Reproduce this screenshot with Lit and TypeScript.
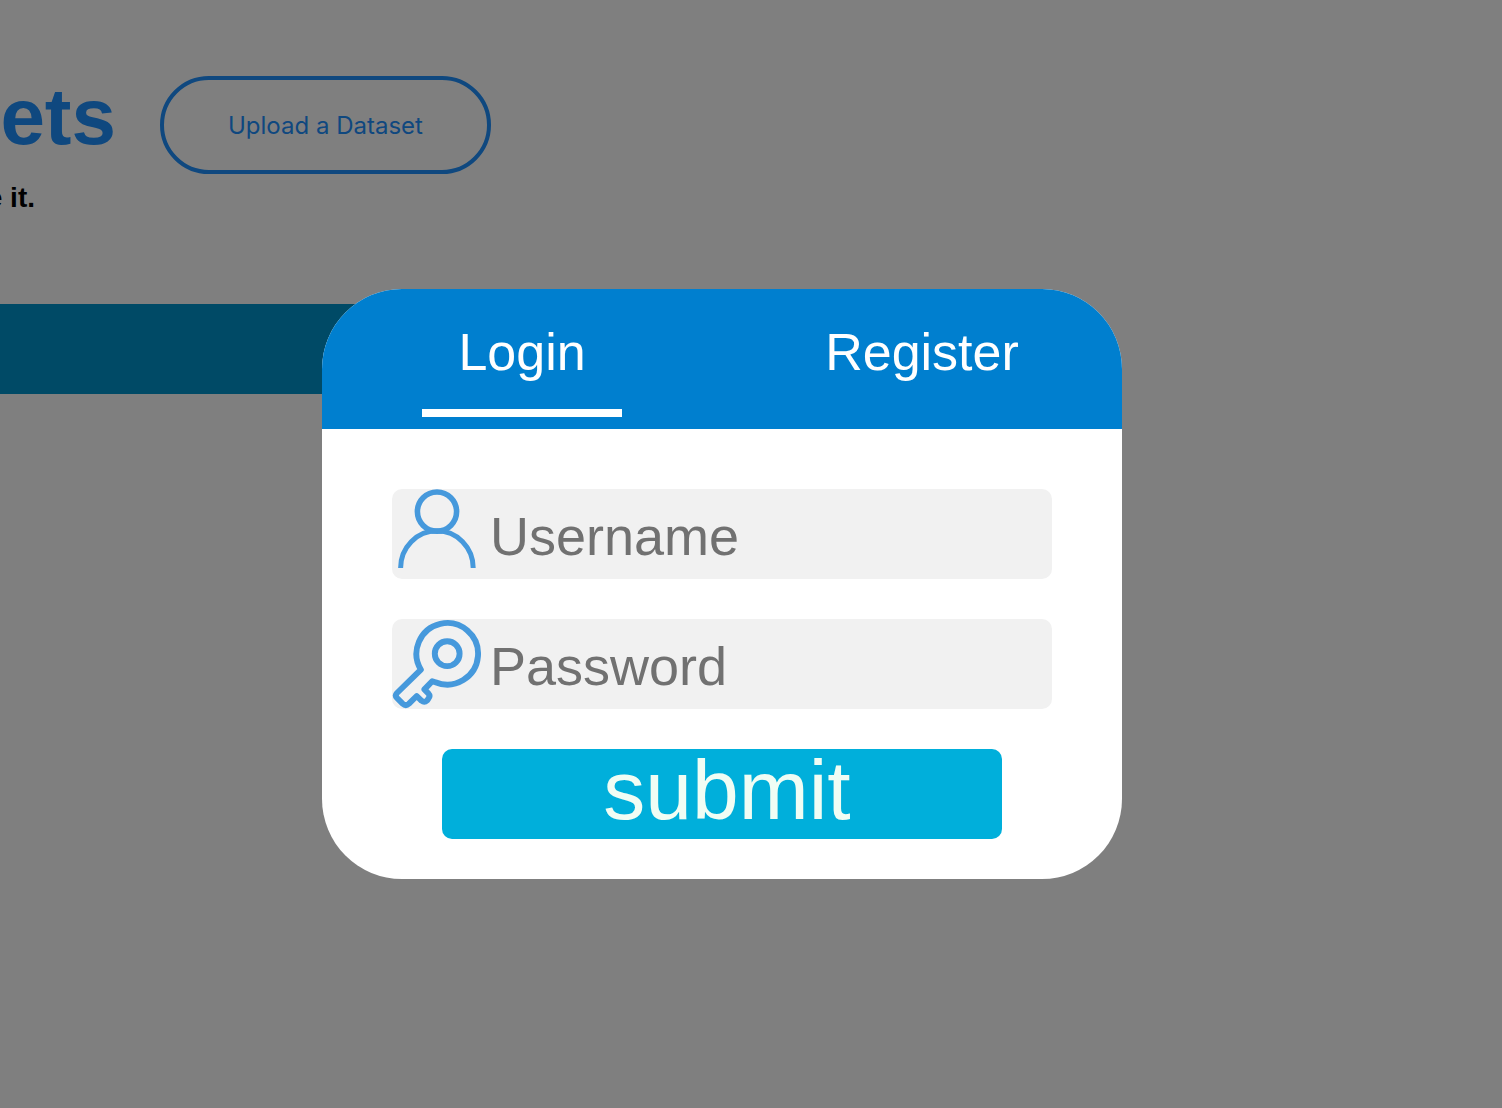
import { LitElement, html, css } from "lit";
import { customElement, state } from "lit/decorators.js";

@customElement("login-dialog")
export class LoginDialog extends LitElement {
  @state() private tab: "Login" | "Register" = "Login";

  static styles = css`
    :host {
      display: block;
      width: 100%;
      max-width: 800px;
      font-family: "Liberation Sans", Arial, sans-serif;
    }
    .card {
      overflow: hidden;
      border-radius: 80px;
      background: #fff;
    }
    .tabs {
      display: grid;
      grid-template-columns: 1fr 1fr;
      background: #007fcf;
    }
    .tab {
      display: flex;
      flex-direction: column;
      align-items: center;
      gap: 26px;
      padding: 32px 0 12px;
      border: 0;
      background: none;
      color: #fff;
      font: inherit;
      font-size: 52px;
      line-height: 62px;
      cursor: pointer;
    }
    .marker {
      width: 200px;
      height: 8px;
    }
    .tab[aria-selected="true"] .marker {
      background: #fff;
    }
    .form {
      display: flex;
      flex-direction: column;
      gap: 40px;
      padding: 60px 70px 40px;
    }
    .field {
      display: flex;
      height: 90px;
      overflow: hidden;
      border-radius: 10px;
      background: #f1f1f1;
    }
    .icon {
      flex: none;
      width: 90px;
      height: 90px;
      fill: none;
      stroke: #4699dc;
    }
    .input {
      flex: 1;
      min-width: 0;
      padding: 4px 8px 0;
      border: 0;
      outline: 0;
      background: none;
      color: #333;
      font: inherit;
      font-size: 54px;
    }
    .input::placeholder {
      color: #717171;
      opacity: 1;
    }
    .submit {
      height: 90px;
      margin: 0 50px;
      padding: 0 0 8px 10px;
      border: 0;
      border-radius: 10px;
      background: #00afdb;
      color: #f0fdf4;
      font: inherit;
      font-size: 84px;
      line-height: 82px;
      cursor: pointer;
    }
  `;

  private renderTab(name: "Login" | "Register") {
    return html`<button
      class="tab"
      type="button"
      role="tab"
      aria-selected=${this.tab === name ? "true" : "false"}
      @click=${() => (this.tab = name)}
    >
      <span>${name}</span><span class="marker"></span>
    </button>`;
  }

  render() {
    return html`
      <div class="card" role="dialog" aria-label=${this.tab}>
        <div class="tabs" role="tablist">
          ${this.renderTab("Login")}${this.renderTab("Register")}
        </div>
        <form class="form" @submit=${(e: Event) => e.preventDefault()}>
          <div class="field">
            <label for="username">
              <svg class="icon" viewBox="0 0 90 90" stroke-width="5.6" aria-hidden="true">
                <circle cx="45" cy="22.6" r="19.6" />
                <path d="M8.6 79A36.3 37.2 0 0 1 81.2 79" stroke-width="5" />
              </svg>
            </label>
            <input class="input" id="username" type="text" placeholder="Username" aria-label="Username" />
          </div>
          <div class="field">
            <label for="password">
              <svg class="icon" viewBox="0 0 90 90" stroke-width="5.9" stroke-linejoin="round" aria-hidden="true">
                <circle cx="55.2" cy="34.7" r="12.4" />
                <path
                  d="M28.9 50.7L5 74Q2.6 76.5 5 79L10.6 84.6Q13.8 87.6 17 84.6L24.7 77L29.6 81.8Q32.4 84 35.2 81.4L36.4 79.6Q38.6 77 36.4 74.6L32.4 70.4L40.2 62.2L43.4 63.2A30.8 30.8 0 1 0 28.9 50.7Z"
                />
              </svg>
            </label>
            <input class="input" id="password" type="password" placeholder="Password" aria-label="Password" />
          </div>
          <button class="submit" type="submit">submit</button>
        </form>
      </div>
    `;
  }
}

@customElement("app-root")
export class AppRoot extends LitElement {
  static styles = css`
    :host {
      display: block;
      font-family: "Liberation Sans", Arial, sans-serif;
    }
    .page {
      box-sizing: border-box;
      min-height: 100vh;
      overflow: hidden;
      padding-top: 76px;
      background: #fff;
    }
    .heading {
      display: flex;
      align-items: center;
      gap: 44px;
    }
    .title {
      display: flex;
      justify-content: flex-end;
      width: 116px;
      margin: 0;
      padding-bottom: 16px;
      color: #1e90ff;
      font-size: 80px;
      line-height: 82px;
    }
    .upload {
      padding: 31px 64px 29px;
      border: 4px solid #1e90ff;
      border-radius: 49px;
      background: none;
      color: #1e90ff;
      font-family: Inter, sans-serif;
      font-size: 24px;
      line-height: 30px;
    }
    .tagline {
      display: flex;
      justify-content: flex-end;
      width: 35px;
      margin: 8px 0 90px;
      font-size: 28px;
      line-height: 32px;
      font-weight: bold;
      white-space: nowrap;
    }
    .band {
      width: 50%;
      height: 90px;
      background: #0094cc;
    }
    .overlay {
      position: fixed;
      inset: 0;
      box-sizing: border-box;
      display: flex;
      align-items: center;
      justify-content: center;
      padding: 60px 58px 0 0;
      background: rgba(0, 0, 0, 0.5);
    }
  `;

  render() {
    return html`
      <main class="page">
        <header class="heading">
          <h1 class="title">ets</h1>
          <button class="upload" type="button">Upload a Dataset</button>
        </header>
        <p class="tagline">e it.</p>
        <div class="band"></div>
      </main>
      <div class="overlay"><login-dialog></login-dialog></div>
    `;
  }
}
